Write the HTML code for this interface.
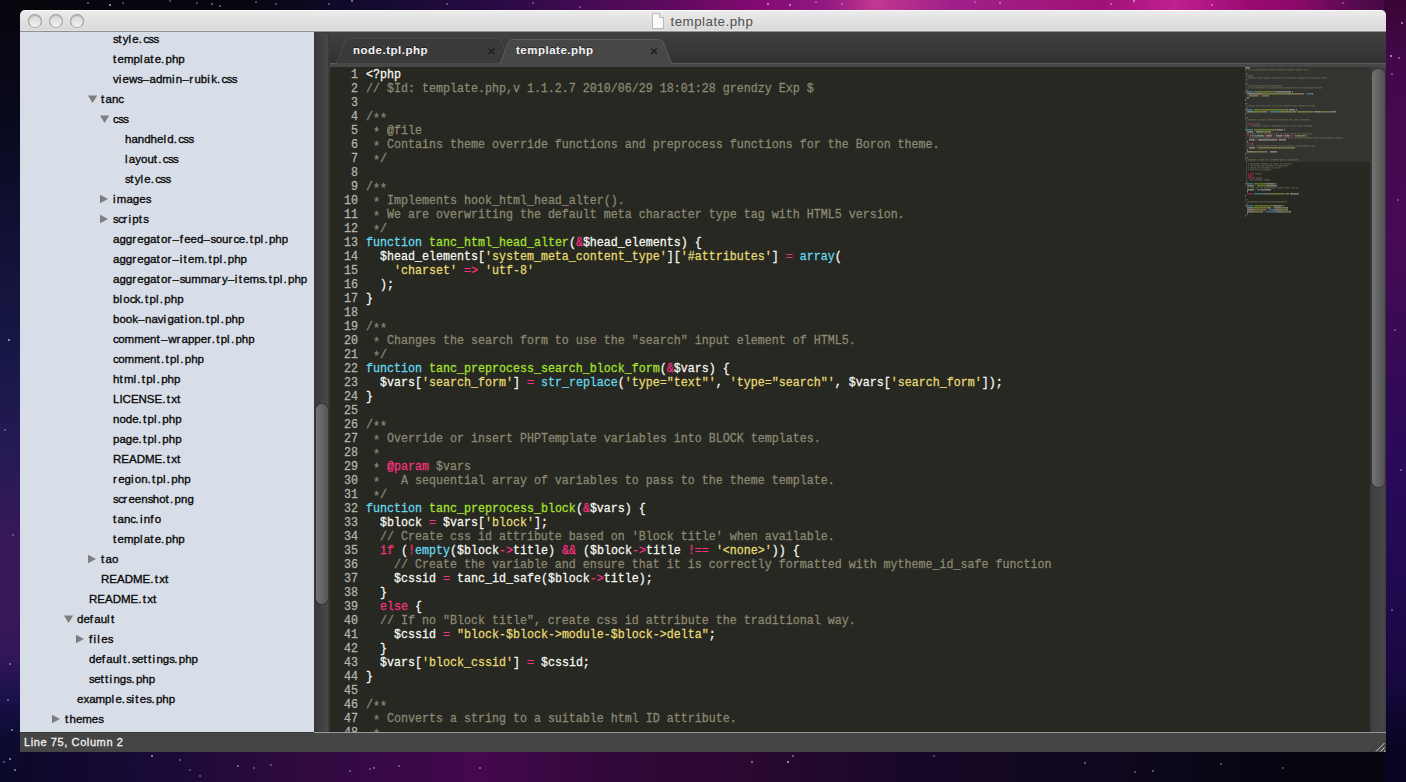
<!DOCTYPE html>
<html><head><meta charset="utf-8"><style>
html,body{margin:0;padding:0;width:1406px;height:782px;overflow:hidden;}
body{position:relative;background:#0a0814;font-family:"Liberation Sans",sans-serif;}
.bgt{position:absolute;left:0;top:0;width:1406px;height:12px;background:linear-gradient(90deg,#06050c 0px,#07060f 250px,#0c0a25 320px,#180a35 400px,#2a0a45 500px,#4a0a55 600px,#600a60 675px,#800a70 750px,#901880 825px,#c03890 875px,#a0208a 950px,#a01a80 1025px,#a01078 1100px,#c02090 1175px,#9a0a72 1250px,#8a0a68 1300px,#5a0a50 1350px,#3a0a3a 1406px);}
.bgb{position:absolute;left:0;top:750px;width:1406px;height:32px;background:linear-gradient(90deg,#0c0828 0px,#1a0a38 170px,#300a40 300px,#3c0848 420px,#45084e 480px,#300838 620px,#2a0830 750px,#180828 900px,#100820 1100px,#05050f 1300px,#05050f 1406px);}
.bgl{position:absolute;left:0;top:0;width:22px;height:782px;background:linear-gradient(180deg,#06050c 0px,#0a0a20 130px,#121238 250px,#181848 360px,#261a55 460px,#3a1858 550px,#3a1858 610px,#30165a 660px,#181048 700px,#0c0a30 740px,#0c0a2a 782px);}
.bgr{position:absolute;left:1384px;top:0;width:22px;height:782px;background:linear-gradient(180deg,#3a0535 0px,#42084a 60px,#470a55 240px,#3a0a55 330px,#2a0a58 460px,#200a50 580px,#180840 680px,#080520 750px,#080520 782px);}
.bg{display:none;position:absolute;left:0;top:0;width:1406px;height:782px;
 background:
  radial-gradient(ellipse 260px 140px at 880px 0px, rgba(190,40,150,0.9), rgba(190,40,150,0) 100%),
  radial-gradient(ellipse 520px 200px at 1050px 0px, rgba(140,20,120,0.95), rgba(140,20,120,0) 100%),
  radial-gradient(ellipse 120px 500px at 1406px 250px, rgba(70,10,90,0.9), rgba(70,10,90,0) 100%),
  radial-gradient(ellipse 300px 120px at 520px 782px, rgba(80,10,80,0.9), rgba(80,10,80,0) 100%),
  radial-gradient(ellipse 90px 300px at 0px 540px, rgba(70,20,90,0.9), rgba(70,20,90,0) 100%),
  linear-gradient(180deg,#05040a 0%, #100c30 30%, #1a0c40 60%, #0c0620 100%);
}
.win{position:absolute;left:20px;top:10px;width:1366px;height:742px;overflow:hidden;border-radius:5px 5px 0 0;background:#3c3c3c;}
.title{position:absolute;left:0;top:0;width:1366px;height:22px;background:linear-gradient(180deg,#fbfbfb 0px,#fbfbfb 1px,#ebebeb 1px,#d9d9d9 20px,#e2e2e2 20px,#e2e2e2 21px,#8f9191 21px);}
.btn{position:absolute;top:4px;width:12px;height:12px;border-radius:50%;border:1px solid #9c9c9c;border-bottom-color:#b4b4b4;box-shadow:inset 0 1px 1px rgba(0,0,0,0.12);background:linear-gradient(180deg,#d6d6d6,#e4e4e4 50%,#f2f2f2);}
.ttext{position:absolute;left:650.5px;top:4px;font-size:13.3px;letter-spacing:0.5px;color:#505050;}
.ticon{position:absolute;left:632px;top:3px;width:12px;height:16px;}
.side{position:absolute;left:0;top:22px;width:294px;height:700px;background:#d8dee8;overflow:hidden;}
.si{position:absolute;height:20px;line-height:20px;font-size:11.5px;color:#0a0a0a;white-space:nowrap;-webkit-text-stroke:0.35px #0a0a0a;}
.tri-d{position:absolute;width:0;height:0;border-left:4.5px solid transparent;border-right:4.5px solid transparent;border-top:8px solid #858585;}
.tri-r{position:absolute;width:0;height:0;border-top:4.5px solid transparent;border-bottom:4.5px solid transparent;border-left:8px solid #858585;}
.sbar{position:absolute;left:294px;top:22px;width:16px;height:700px;background:#3a3a3a;}
.sbar .trk{position:absolute;left:1px;top:1px;width:13px;height:699px;background:linear-gradient(90deg,#393939,#484848);border-radius:0 4px 0 0;}
.sbar .thumb{position:absolute;left:2px;top:372px;width:12px;height:200px;border-radius:6px;background:linear-gradient(90deg,#747474,#555555);box-shadow:0 0 0 1px #333;}
.tabbar{position:absolute;left:310px;top:22px;width:1056px;height:35px;}
.tabt{position:absolute;top:10.5px;font-size:11.5px;font-weight:bold;letter-spacing:0.5px;color:#f4f4f4;line-height:14px;text-shadow:0 -1px 0 rgba(0,0,0,0.5);}
.editor{position:absolute;left:310px;top:57px;width:1040px;height:665px;background:#272822;overflow:hidden;}
.ln{position:absolute;left:0;height:14px;line-height:14px;white-space:pre;font-family:"Liberation Mono",monospace;font-size:11.667px;-webkit-text-stroke:0.25px currentColor;}
.num{position:absolute;left:0;width:28px;text-align:right;color:#b4b4ae;transform:scaleY(1.05);transform-origin:0 10px;}
.tx{position:absolute;left:36px;transform:scaleY(1.05);transform-origin:0 10px;}
.w{color:#f8f8f2}.c{color:#8c8872}.k{color:#f5317f}.f{color:#66d9ef}.g{color:#a6e22e}.s{color:#e6db74}
.mm{position:absolute;left:915px;top:0px;}
.mmhl{position:absolute;left:915px;top:-1px;width:125px;height:96px;background:rgba(255,255,255,0.06);}
.vbar{position:absolute;left:1350px;top:57px;width:16px;height:665px;background:linear-gradient(90deg,#363636 0px,#404040 2px,#474747 14px,#3c3c3c 16px);}
.vbar .thumb{position:absolute;left:1.5px;top:2px;width:13px;height:418px;border-radius:6px;background:linear-gradient(90deg,#747474,#5a5a5a 70%,#505050);box-shadow:0 0 0 1px #333;}
.status{position:absolute;left:0;top:722px;width:1366px;height:20px;background:linear-gradient(90deg,#3a3a3a 0px,#3a3a3a 294px,#9a9a9a 294px) top/100% 1px no-repeat,#454545;}
.stext{position:absolute;left:4px;top:4px;font-size:11px;letter-spacing:0.6px;color:#f2f2f2;-webkit-text-stroke:0.3px #f2f2f2;}

.ast{position:relative;top:2px;}
.tri{position:absolute;}
.si i{font-style:normal;}
.si .n{letter-spacing:1.3px;}
.si .sc{letter-spacing:-0.6px;}
.si .hy{letter-spacing:0.7px;}

</style></head><body>
<div class="bgt"></div><div class="bgb"></div><div class="bgl"></div><div class="bgr"></div><svg style="position:absolute;left:0;top:0" width="1406" height="782"><circle cx="88" cy="3" r="1" fill="#e8d8f8" fill-opacity="0.5"/><circle cx="110" cy="5" r="1" fill="#e8d8f8" fill-opacity="0.8"/><circle cx="123" cy="3" r="1" fill="#e8d8f8" fill-opacity="0.4"/><circle cx="170" cy="1" r="1" fill="#e8d8f8" fill-opacity="0.4"/><circle cx="197" cy="3" r="1" fill="#e8d8f8" fill-opacity="0.4"/><circle cx="212" cy="4" r="1" fill="#e8d8f8" fill-opacity="0.5"/><circle cx="220" cy="6" r="1" fill="#e8d8f8" fill-opacity="0.5"/><circle cx="256" cy="2" r="1" fill="#e8d8f8" fill-opacity="0.4"/><circle cx="276" cy="4" r="1" fill="#e8d8f8" fill-opacity="0.4"/><circle cx="329" cy="4" r="1" fill="#e8d8f8" fill-opacity="0.4"/><circle cx="352" cy="1" r="1" fill="#e8d8f8" fill-opacity="0.6"/><circle cx="447" cy="4" r="1" fill="#e8d8f8" fill-opacity="0.4"/><circle cx="533" cy="3" r="1" fill="#e8d8f8" fill-opacity="0.4"/><circle cx="580" cy="7" r="1" fill="#e8d8f8" fill-opacity="0.4"/><circle cx="768" cy="4" r="1" fill="#e8d8f8" fill-opacity="0.7"/><circle cx="790" cy="5" r="1" fill="#e8d8f8" fill-opacity="0.7"/><circle cx="816" cy="2" r="1" fill="#e8d8f8" fill-opacity="0.4"/><circle cx="842" cy="4" r="1" fill="#e8d8f8" fill-opacity="0.4"/><circle cx="975" cy="2" r="1" fill="#e8d8f8" fill-opacity="0.4"/><circle cx="1000" cy="3" r="1" fill="#e8d8f8" fill-opacity="0.5"/><circle cx="1111" cy="4" r="1" fill="#e8d8f8" fill-opacity="0.5"/><circle cx="1134" cy="1" r="1" fill="#e8d8f8" fill-opacity="0.7"/><circle cx="1212" cy="5" r="1" fill="#e8d8f8" fill-opacity="0.5"/><circle cx="1343" cy="3" r="1" fill="#e8d8f8" fill-opacity="0.4"/><circle cx="1402" cy="23" r="1" fill="#e8d8f8" fill-opacity="0.7"/><circle cx="1391" cy="56" r="1" fill="#e8d8f8" fill-opacity="0.8"/><circle cx="1399" cy="58" r="1" fill="#e8d8f8" fill-opacity="0.5"/><circle cx="1392" cy="74" r="1" fill="#e8d8f8" fill-opacity="0.4"/><circle cx="1398" cy="200" r="1" fill="#e8d8f8" fill-opacity="0.4"/><circle cx="1395" cy="330" r="1" fill="#e8d8f8" fill-opacity="0.4"/><circle cx="1401" cy="470" r="1" fill="#e8d8f8" fill-opacity="0.4"/><circle cx="1392" cy="610" r="1" fill="#e8d8f8" fill-opacity="0.4"/><circle cx="9" cy="340" r="1" fill="#e8d8f8" fill-opacity="0.8"/><circle cx="5" cy="430" r="1" fill="#e8d8f8" fill-opacity="0.4"/><circle cx="13" cy="535" r="1" fill="#e8d8f8" fill-opacity="0.4"/><circle cx="10" cy="664" r="1" fill="#e8d8f8" fill-opacity="0.5"/><circle cx="8" cy="700" r="1" fill="#e8d8f8" fill-opacity="0.5"/><circle cx="12" cy="730" r="1" fill="#e8d8f8" fill-opacity="0.6"/><circle cx="4" cy="762" r="1" fill="#e8d8f8" fill-opacity="0.4"/><circle cx="10" cy="759" r="1" fill="#e8d8f8" fill-opacity="0.7"/><circle cx="15" cy="770" r="1" fill="#e8d8f8" fill-opacity="0.6"/><circle cx="152" cy="756" r="1" fill="#e8d8f8" fill-opacity="0.7"/><circle cx="180" cy="760" r="1" fill="#e8d8f8" fill-opacity="0.4"/><circle cx="190" cy="770" r="1" fill="#e8d8f8" fill-opacity="0.4"/><circle cx="200" cy="776" r="1" fill="#e8d8f8" fill-opacity="0.4"/><circle cx="238" cy="766" r="1" fill="#e8d8f8" fill-opacity="0.5"/><circle cx="254" cy="768" r="1" fill="#e8d8f8" fill-opacity="0.4"/><circle cx="271" cy="765" r="1" fill="#e8d8f8" fill-opacity="0.4"/><circle cx="350" cy="771" r="1" fill="#e8d8f8" fill-opacity="0.4"/><circle cx="370" cy="769" r="1" fill="#e8d8f8" fill-opacity="0.4"/><circle cx="374" cy="768" r="1" fill="#e8d8f8" fill-opacity="0.5"/><circle cx="399" cy="766" r="1" fill="#e8d8f8" fill-opacity="0.4"/><circle cx="480" cy="768" r="1" fill="#e8d8f8" fill-opacity="0.5"/><circle cx="752" cy="762" r="1" fill="#e8d8f8" fill-opacity="0.6"/><circle cx="788" cy="762" r="1" fill="#e8d8f8" fill-opacity="0.8"/><circle cx="793" cy="756" r="1" fill="#e8d8f8" fill-opacity="0.5"/><circle cx="934" cy="756" r="1" fill="#e8d8f8" fill-opacity="0.4"/><circle cx="1085" cy="763" r="1" fill="#e8d8f8" fill-opacity="0.5"/><circle cx="1135" cy="772" r="1" fill="#e8d8f8" fill-opacity="0.4"/><circle cx="1153" cy="771" r="1" fill="#e8d8f8" fill-opacity="0.5"/><circle cx="1221" cy="764" r="1" fill="#e8d8f8" fill-opacity="0.4"/><circle cx="1283" cy="768" r="1" fill="#e8d8f8" fill-opacity="0.4"/></svg>
<div class="win">
 <div class="title">
  <div class="btn" style="left:8px"></div>
  <div class="btn" style="left:29px"></div>
  <div class="btn" style="left:50px"></div>
  <svg class="ticon" viewBox="0 0 12 16"><path d="M0.5 0.5 H7.5 L11.5 4.5 V15.5 H0.5 Z" fill="#fafafa" stroke="#b8b8b8"/><path d="M7.5 0.5 V4.5 H11.5" fill="#eeeeee" stroke="#b8b8b8"/></svg>
  <div class="ttext">template.php</div>
 </div>
 <div class="side">
<div class="si" style="left:93px;top:-3px"><i class="sc">s</i><i class="n">t</i>y<i class="n">l</i>e<i class="n">.</i><i class="sc">c</i><i class="sc">s</i><i class="sc">s</i></div>
<div class="si" style="left:93px;top:17px"><i class="n">t</i>emp<i class="n">l</i>a<i class="n">t</i>e<i class="n">.</i>php</div>
<div class="si" style="left:93px;top:37px">v<i class="n">i</i>ew<i class="sc">s</i><i class="hy">–</i>adm<i class="n">i</i>n<i class="hy">–</i><i class="n">r</i>ub<i class="n">i</i>k<i class="n">.</i><i class="sc">c</i><i class="sc">s</i><i class="sc">s</i></div>
<div class="si" style="left:81px;top:57px"><i class="n">t</i>an<i class="sc">c</i></div>
<svg class="tri" style="left:68px;top:63px" width="10" height="9"><path d="M0,0.4 L9.2,0.4 L4.6,8 Z" fill="#7e7e7e"/></svg>
<div class="si" style="left:93px;top:77px"><i class="sc">c</i><i class="sc">s</i><i class="sc">s</i></div>
<svg class="tri" style="left:80px;top:83px" width="10" height="9"><path d="M0,0.4 L9.2,0.4 L4.6,8 Z" fill="#7e7e7e"/></svg>
<div class="si" style="left:105px;top:97px">handhe<i class="n">l</i>d<i class="n">.</i><i class="sc">c</i><i class="sc">s</i><i class="sc">s</i></div>
<div class="si" style="left:105px;top:117px"><i class="n">l</i>ayou<i class="n">t</i><i class="n">.</i><i class="sc">c</i><i class="sc">s</i><i class="sc">s</i></div>
<div class="si" style="left:105px;top:137px"><i class="sc">s</i><i class="n">t</i>y<i class="n">l</i>e<i class="n">.</i><i class="sc">c</i><i class="sc">s</i><i class="sc">s</i></div>
<div class="si" style="left:93px;top:157px"><i class="n">i</i>mage<i class="sc">s</i></div>
<svg class="tri" style="left:80px;top:162px" width="10" height="10"><path d="M0,0.7 L8,5 L0,9.3 Z" fill="#7e7e7e"/></svg>
<div class="si" style="left:93px;top:177px"><i class="sc">s</i><i class="sc">c</i><i class="n">r</i><i class="n">i</i>p<i class="n">t</i><i class="sc">s</i></div>
<svg class="tri" style="left:80px;top:182px" width="10" height="10"><path d="M0,0.7 L8,5 L0,9.3 Z" fill="#7e7e7e"/></svg>
<div class="si" style="left:93px;top:197px">agg<i class="n">r</i>ega<i class="n">t</i>o<i class="n">r</i><i class="hy">–</i><i class="n">f</i>eed<i class="hy">–</i><i class="sc">s</i>ou<i class="n">r</i><i class="sc">c</i>e<i class="n">.</i><i class="n">t</i>p<i class="n">l</i><i class="n">.</i>php</div>
<div class="si" style="left:93px;top:217px">agg<i class="n">r</i>ega<i class="n">t</i>o<i class="n">r</i><i class="hy">–</i><i class="n">i</i><i class="n">t</i>em<i class="n">.</i><i class="n">t</i>p<i class="n">l</i><i class="n">.</i>php</div>
<div class="si" style="left:93px;top:237px">agg<i class="n">r</i>ega<i class="n">t</i>o<i class="n">r</i><i class="hy">–</i><i class="sc">s</i>umma<i class="n">r</i>y<i class="hy">–</i><i class="n">i</i><i class="n">t</i>em<i class="sc">s</i><i class="n">.</i><i class="n">t</i>p<i class="n">l</i><i class="n">.</i>php</div>
<div class="si" style="left:93px;top:257px">b<i class="n">l</i>o<i class="sc">c</i>k<i class="n">.</i><i class="n">t</i>p<i class="n">l</i><i class="n">.</i>php</div>
<div class="si" style="left:93px;top:277px">book<i class="hy">–</i>nav<i class="n">i</i>ga<i class="n">t</i><i class="n">i</i>on<i class="n">.</i><i class="n">t</i>p<i class="n">l</i><i class="n">.</i>php</div>
<div class="si" style="left:93px;top:297px"><i class="sc">c</i>ommen<i class="n">t</i><i class="hy">–</i>w<i class="n">r</i>appe<i class="n">r</i><i class="n">.</i><i class="n">t</i>p<i class="n">l</i><i class="n">.</i>php</div>
<div class="si" style="left:93px;top:317px"><i class="sc">c</i>ommen<i class="n">t</i><i class="n">.</i><i class="n">t</i>p<i class="n">l</i><i class="n">.</i>php</div>
<div class="si" style="left:93px;top:337px">h<i class="n">t</i>m<i class="n">l</i><i class="n">.</i><i class="n">t</i>p<i class="n">l</i><i class="n">.</i>php</div>
<div class="si" style="left:93px;top:357px">LICENSE<i class="n">.</i><i class="n">t</i>x<i class="n">t</i></div>
<div class="si" style="left:93px;top:377px">node<i class="n">.</i><i class="n">t</i>p<i class="n">l</i><i class="n">.</i>php</div>
<div class="si" style="left:93px;top:397px">page<i class="n">.</i><i class="n">t</i>p<i class="n">l</i><i class="n">.</i>php</div>
<div class="si" style="left:93px;top:417px">README<i class="n">.</i><i class="n">t</i>x<i class="n">t</i></div>
<div class="si" style="left:93px;top:437px"><i class="n">r</i>eg<i class="n">i</i>on<i class="n">.</i><i class="n">t</i>p<i class="n">l</i><i class="n">.</i>php</div>
<div class="si" style="left:93px;top:457px"><i class="sc">s</i><i class="sc">c</i><i class="n">r</i>een<i class="sc">s</i>ho<i class="n">t</i><i class="n">.</i>png</div>
<div class="si" style="left:93px;top:477px"><i class="n">t</i>an<i class="sc">c</i><i class="n">.</i><i class="n">i</i>n<i class="n">f</i>o</div>
<div class="si" style="left:93px;top:497px"><i class="n">t</i>emp<i class="n">l</i>a<i class="n">t</i>e<i class="n">.</i>php</div>
<div class="si" style="left:81px;top:517px"><i class="n">t</i>ao</div>
<svg class="tri" style="left:68px;top:522px" width="10" height="10"><path d="M0,0.7 L8,5 L0,9.3 Z" fill="#7e7e7e"/></svg>
<div class="si" style="left:81px;top:537px">README<i class="n">.</i><i class="n">t</i>x<i class="n">t</i></div>
<div class="si" style="left:69px;top:557px">README<i class="n">.</i><i class="n">t</i>x<i class="n">t</i></div>
<div class="si" style="left:57px;top:577px">de<i class="n">f</i>au<i class="n">l</i><i class="n">t</i></div>
<svg class="tri" style="left:44px;top:583px" width="10" height="9"><path d="M0,0.4 L9.2,0.4 L4.6,8 Z" fill="#7e7e7e"/></svg>
<div class="si" style="left:69px;top:597px"><i class="n">f</i><i class="n">i</i><i class="n">l</i>e<i class="sc">s</i></div>
<svg class="tri" style="left:56px;top:602px" width="10" height="10"><path d="M0,0.7 L8,5 L0,9.3 Z" fill="#7e7e7e"/></svg>
<div class="si" style="left:69px;top:617px">de<i class="n">f</i>au<i class="n">l</i><i class="n">t</i><i class="n">.</i><i class="sc">s</i>e<i class="n">t</i><i class="n">t</i><i class="n">i</i>ng<i class="sc">s</i><i class="n">.</i>php</div>
<div class="si" style="left:69px;top:637px"><i class="sc">s</i>e<i class="n">t</i><i class="n">t</i><i class="n">i</i>ng<i class="sc">s</i><i class="n">.</i>php</div>
<div class="si" style="left:57px;top:657px">examp<i class="n">l</i>e<i class="n">.</i><i class="sc">s</i><i class="n">i</i><i class="n">t</i>e<i class="sc">s</i><i class="n">.</i>php</div>
<div class="si" style="left:45px;top:677px"><i class="n">t</i>heme<i class="sc">s</i></div>
<svg class="tri" style="left:32px;top:682px" width="10" height="10"><path d="M0,0.7 L8,5 L0,9.3 Z" fill="#7e7e7e"/></svg>
 </div>
 <div class="sbar"><div class="trk"></div><div class="thumb"></div></div>
 <div class="tabbar">
  <svg width="1056" height="35" viewBox="0 0 1056 35" style="position:absolute;left:0;top:0">
   <defs><linearGradient id="tbg" x1="0" y1="0" x2="0" y2="1"><stop offset="0" stop-color="#414141"/><stop offset="1" stop-color="#313131"/></linearGradient></defs>
   <rect x="0" y="0" width="1056" height="31" fill="url(#tbg)"/>
   <rect x="0" y="31" width="1056" height="1" fill="#5c5c5c"/>
   <rect x="0" y="32" width="1056" height="3" fill="#474747"/>
   <path d="M6,31.5 L14.4,11.5 Q16,6.5 19,6.5 L167,6.5 Q170.5,6.5 172,11.5 L180,31.5 Z" fill="#3a3a3a" stroke="#4a4a4a" stroke-width="1"/>
   <path d="M170,32 L177,13.8 Q179,7.5 182.5,7.5 L329,7.5 Q332.5,7.5 334.4,12.9 L341.8,32 Z" fill="#474747" stroke="#5c5c5c" stroke-width="1"/>
   <rect x="171" y="31" width="170" height="2" fill="#474747"/>
   <path d="M158.5,16.5 L164.5,22 M164.5,16.5 L158.5,22" stroke="#1e1e1e" stroke-width="1.4"/>
   <path d="M321,16.5 L327,22 M327,16.5 L321,22" stroke="#1e1e1e" stroke-width="1.4"/>
  </svg>
  <div class="tabt" style="left:23px">node.tpl.php</div>
  <div class="tabt" style="left:186px">template.php</div>
 </div>
 <div class="editor">
<div class="ln" style="top:1px"><span class="num">1</span><span class="tx"><span class="w">&lt;?php</span></span></div>
<div class="ln" style="top:15px"><span class="num">2</span><span class="tx"><span class="c">// $Id: template.php,v 1.1.2.7 2010/06/29 18:01:28 grendzy Exp $</span></span></div>
<div class="ln" style="top:29px"><span class="num">3</span><span class="tx"></span></div>
<div class="ln" style="top:43px"><span class="num">4</span><span class="tx"><span class="c">/<span class="ast">*</span><span class="ast">*</span></span></span></div>
<div class="ln" style="top:57px"><span class="num">5</span><span class="tx"><span class="c"> <span class="ast">*</span> @file</span></span></div>
<div class="ln" style="top:71px"><span class="num">6</span><span class="tx"><span class="c"> <span class="ast">*</span> Contains theme override functions and preprocess functions for the Boron theme.</span></span></div>
<div class="ln" style="top:85px"><span class="num">7</span><span class="tx"><span class="c"> <span class="ast">*</span>/</span></span></div>
<div class="ln" style="top:99px"><span class="num">8</span><span class="tx"></span></div>
<div class="ln" style="top:113px"><span class="num">9</span><span class="tx"><span class="c">/<span class="ast">*</span><span class="ast">*</span></span></span></div>
<div class="ln" style="top:127px"><span class="num">10</span><span class="tx"><span class="c"> <span class="ast">*</span> Implements hook_html_head_alter().</span></span></div>
<div class="ln" style="top:141px"><span class="num">11</span><span class="tx"><span class="c"> <span class="ast">*</span> We are overwriting the default meta character type tag with HTML5 version.</span></span></div>
<div class="ln" style="top:155px"><span class="num">12</span><span class="tx"><span class="c"> <span class="ast">*</span>/</span></span></div>
<div class="ln" style="top:169px"><span class="num">13</span><span class="tx"><span class="f">function</span><span class="w"> </span><span class="g">tanc_html_head_alter</span><span class="w">(</span><span class="k">&amp;</span><span class="w">$head_elements) {</span></span></div>
<div class="ln" style="top:183px"><span class="num">14</span><span class="tx"><span class="w">  $head_elements[</span><span class="s">&#x27;system_meta_content_type&#x27;</span><span class="w">][</span><span class="s">&#x27;#attributes&#x27;</span><span class="w">] </span><span class="k">=</span><span class="w"> </span><span class="f">array</span><span class="w">(</span></span></div>
<div class="ln" style="top:197px"><span class="num">15</span><span class="tx"><span class="w">    </span><span class="s">&#x27;charset&#x27;</span><span class="w"> </span><span class="k">=&gt;</span><span class="w"> </span><span class="s">&#x27;utf-8&#x27;</span></span></div>
<div class="ln" style="top:211px"><span class="num">16</span><span class="tx"><span class="w">  );</span></span></div>
<div class="ln" style="top:225px"><span class="num">17</span><span class="tx"><span class="w">}</span></span></div>
<div class="ln" style="top:239px"><span class="num">18</span><span class="tx"></span></div>
<div class="ln" style="top:253px"><span class="num">19</span><span class="tx"><span class="c">/<span class="ast">*</span><span class="ast">*</span></span></span></div>
<div class="ln" style="top:267px"><span class="num">20</span><span class="tx"><span class="c"> <span class="ast">*</span> Changes the search form to use the &quot;search&quot; input element of HTML5.</span></span></div>
<div class="ln" style="top:281px"><span class="num">21</span><span class="tx"><span class="c"> <span class="ast">*</span>/</span></span></div>
<div class="ln" style="top:295px"><span class="num">22</span><span class="tx"><span class="f">function</span><span class="w"> </span><span class="g">tanc_preprocess_search_block_form</span><span class="w">(</span><span class="k">&amp;</span><span class="w">$vars) {</span></span></div>
<div class="ln" style="top:309px"><span class="num">23</span><span class="tx"><span class="w">  $vars[</span><span class="s">&#x27;search_form&#x27;</span><span class="w">] </span><span class="k">=</span><span class="w"> </span><span class="f">str_replace</span><span class="w">(</span><span class="s">&#x27;type=&quot;text&quot;&#x27;</span><span class="w">, </span><span class="s">&#x27;type=&quot;search&quot;&#x27;</span><span class="w">, $vars[</span><span class="s">&#x27;search_form&#x27;</span><span class="w">]);</span></span></div>
<div class="ln" style="top:323px"><span class="num">24</span><span class="tx"><span class="w">}</span></span></div>
<div class="ln" style="top:337px"><span class="num">25</span><span class="tx"></span></div>
<div class="ln" style="top:351px"><span class="num">26</span><span class="tx"><span class="c">/<span class="ast">*</span><span class="ast">*</span></span></span></div>
<div class="ln" style="top:365px"><span class="num">27</span><span class="tx"><span class="c"> <span class="ast">*</span> Override or insert PHPTemplate variables into BLOCK templates.</span></span></div>
<div class="ln" style="top:379px"><span class="num">28</span><span class="tx"><span class="c"> <span class="ast">*</span></span></span></div>
<div class="ln" style="top:393px"><span class="num">29</span><span class="tx"><span class="c"> <span class="ast">*</span> </span><span class="k">@param</span><span class="c"> $vars</span></span></div>
<div class="ln" style="top:407px"><span class="num">30</span><span class="tx"><span class="c"> <span class="ast">*</span>   A sequential array of variables to pass to the theme template.</span></span></div>
<div class="ln" style="top:421px"><span class="num">31</span><span class="tx"><span class="c"> <span class="ast">*</span>/</span></span></div>
<div class="ln" style="top:435px"><span class="num">32</span><span class="tx"><span class="f">function</span><span class="w"> </span><span class="g">tanc_preprocess_block</span><span class="w">(</span><span class="k">&amp;</span><span class="w">$vars) {</span></span></div>
<div class="ln" style="top:449px"><span class="num">33</span><span class="tx"><span class="w">  $block </span><span class="k">=</span><span class="w"> $vars[</span><span class="s">&#x27;block&#x27;</span><span class="w">];</span></span></div>
<div class="ln" style="top:463px"><span class="num">34</span><span class="tx"><span class="c">  // Create css id attribute based on &#x27;Block title&#x27; when available.</span></span></div>
<div class="ln" style="top:477px"><span class="num">35</span><span class="tx"><span class="w">  </span><span class="k">if</span><span class="w"> (</span><span class="k">!</span><span class="f">empty</span><span class="w">($block</span><span class="k">-&gt;</span><span class="w">title) </span><span class="k">&amp;&amp;</span><span class="w"> ($block</span><span class="k">-&gt;</span><span class="w">title </span><span class="k">!==</span><span class="w"> </span><span class="s">&#x27;&lt;none&gt;&#x27;</span><span class="w">)) {</span></span></div>
<div class="ln" style="top:491px"><span class="num">36</span><span class="tx"><span class="c">    // Create the variable and ensure that it is correctly formatted with mytheme_id_safe function</span></span></div>
<div class="ln" style="top:505px"><span class="num">37</span><span class="tx"><span class="w">    $cssid </span><span class="k">=</span><span class="w"> tanc_id_safe($block</span><span class="k">-&gt;</span><span class="w">title);</span></span></div>
<div class="ln" style="top:519px"><span class="num">38</span><span class="tx"><span class="w">  }</span></span></div>
<div class="ln" style="top:533px"><span class="num">39</span><span class="tx"><span class="w">  </span><span class="k">else</span><span class="w"> {</span></span></div>
<div class="ln" style="top:547px"><span class="num">40</span><span class="tx"><span class="c">  // If no &quot;Block title&quot;, create css id attribute the traditional way.</span></span></div>
<div class="ln" style="top:561px"><span class="num">41</span><span class="tx"><span class="w">    $cssid </span><span class="k">=</span><span class="w"> </span><span class="s">&quot;block-$block-&gt;module-$block-&gt;delta&quot;</span><span class="w">;</span></span></div>
<div class="ln" style="top:575px"><span class="num">42</span><span class="tx"><span class="w">  }</span></span></div>
<div class="ln" style="top:589px"><span class="num">43</span><span class="tx"><span class="w">  $vars[</span><span class="s">&#x27;block_cssid&#x27;</span><span class="w">] </span><span class="k">=</span><span class="w"> $cssid;</span></span></div>
<div class="ln" style="top:603px"><span class="num">44</span><span class="tx"><span class="w">}</span></span></div>
<div class="ln" style="top:617px"><span class="num">45</span><span class="tx"></span></div>
<div class="ln" style="top:631px"><span class="num">46</span><span class="tx"><span class="c">/<span class="ast">*</span><span class="ast">*</span></span></span></div>
<div class="ln" style="top:645px"><span class="num">47</span><span class="tx"><span class="c"> <span class="ast">*</span> Converts a string to a suitable html ID attribute.</span></span></div>
<div class="ln" style="top:659px"><span class="num">48</span><span class="tx"><span class="c"> <span class="ast">*</span></span></span></div>
 <div class="mmhl"></div>
<svg class="mm" width="125" height="160" viewBox="0 0 125 160" style="opacity:0.38"><rect x="0" y="0" width="5" height="1.6" fill="#f8f8f2"/><rect x="0" y="2" width="2" height="1.6" fill="#807c68"/><rect x="3" y="2" width="4" height="1.6" fill="#807c68"/><rect x="8" y="2" width="14" height="1.6" fill="#807c68"/><rect x="23" y="2" width="7" height="1.6" fill="#807c68"/><rect x="31" y="2" width="10" height="1.6" fill="#807c68"/><rect x="42" y="2" width="8" height="1.6" fill="#807c68"/><rect x="51" y="2" width="7" height="1.6" fill="#807c68"/><rect x="59" y="2" width="3" height="1.6" fill="#807c68"/><rect x="63" y="2" width="1" height="1.6" fill="#807c68"/><rect x="0" y="6" width="3" height="1.6" fill="#807c68"/><rect x="1" y="8" width="1" height="1.6" fill="#807c68"/><rect x="3" y="8" width="5" height="1.6" fill="#807c68"/><rect x="1" y="10" width="1" height="1.6" fill="#807c68"/><rect x="3" y="10" width="8" height="1.6" fill="#807c68"/><rect x="12" y="10" width="5" height="1.6" fill="#807c68"/><rect x="18" y="10" width="8" height="1.6" fill="#807c68"/><rect x="27" y="10" width="9" height="1.6" fill="#807c68"/><rect x="37" y="10" width="3" height="1.6" fill="#807c68"/><rect x="41" y="10" width="10" height="1.6" fill="#807c68"/><rect x="52" y="10" width="9" height="1.6" fill="#807c68"/><rect x="62" y="10" width="3" height="1.6" fill="#807c68"/><rect x="66" y="10" width="3" height="1.6" fill="#807c68"/><rect x="70" y="10" width="5" height="1.6" fill="#807c68"/><rect x="76" y="10" width="6" height="1.6" fill="#807c68"/><rect x="1" y="12" width="2" height="1.6" fill="#807c68"/><rect x="0" y="16" width="3" height="1.6" fill="#807c68"/><rect x="1" y="18" width="1" height="1.6" fill="#807c68"/><rect x="3" y="18" width="10" height="1.6" fill="#807c68"/><rect x="14" y="18" width="23" height="1.6" fill="#807c68"/><rect x="1" y="20" width="1" height="1.6" fill="#807c68"/><rect x="3" y="20" width="2" height="1.6" fill="#807c68"/><rect x="6" y="20" width="3" height="1.6" fill="#807c68"/><rect x="10" y="20" width="11" height="1.6" fill="#807c68"/><rect x="22" y="20" width="3" height="1.6" fill="#807c68"/><rect x="26" y="20" width="7" height="1.6" fill="#807c68"/><rect x="34" y="20" width="4" height="1.6" fill="#807c68"/><rect x="39" y="20" width="9" height="1.6" fill="#807c68"/><rect x="49" y="20" width="4" height="1.6" fill="#807c68"/><rect x="54" y="20" width="3" height="1.6" fill="#807c68"/><rect x="58" y="20" width="4" height="1.6" fill="#807c68"/><rect x="63" y="20" width="5" height="1.6" fill="#807c68"/><rect x="69" y="20" width="8" height="1.6" fill="#807c68"/><rect x="1" y="22" width="2" height="1.6" fill="#807c68"/><rect x="0" y="24" width="8" height="1.6" fill="#66d9ef"/><rect x="9" y="24" width="20" height="1.6" fill="#a6e22e"/><rect x="29" y="24" width="1" height="1.6" fill="#f8f8f2"/><rect x="30" y="24" width="1" height="1.6" fill="#f92672"/><rect x="31" y="24" width="15" height="1.6" fill="#f8f8f2"/><rect x="47" y="24" width="1" height="1.6" fill="#f8f8f2"/><rect x="2" y="26" width="15" height="1.6" fill="#f8f8f2"/><rect x="17" y="26" width="26" height="1.6" fill="#e6db74"/><rect x="43" y="26" width="2" height="1.6" fill="#f8f8f2"/><rect x="45" y="26" width="13" height="1.6" fill="#e6db74"/><rect x="58" y="26" width="1" height="1.6" fill="#f8f8f2"/><rect x="60" y="26" width="1" height="1.6" fill="#f92672"/><rect x="62" y="26" width="5" height="1.6" fill="#66d9ef"/><rect x="67" y="26" width="1" height="1.6" fill="#f8f8f2"/><rect x="4" y="28" width="9" height="1.6" fill="#e6db74"/><rect x="14" y="28" width="2" height="1.6" fill="#f92672"/><rect x="17" y="28" width="7" height="1.6" fill="#e6db74"/><rect x="2" y="30" width="2" height="1.6" fill="#f8f8f2"/><rect x="0" y="32" width="1" height="1.6" fill="#f8f8f2"/><rect x="0" y="36" width="3" height="1.6" fill="#807c68"/><rect x="1" y="38" width="1" height="1.6" fill="#807c68"/><rect x="3" y="38" width="7" height="1.6" fill="#807c68"/><rect x="11" y="38" width="3" height="1.6" fill="#807c68"/><rect x="15" y="38" width="6" height="1.6" fill="#807c68"/><rect x="22" y="38" width="4" height="1.6" fill="#807c68"/><rect x="27" y="38" width="2" height="1.6" fill="#807c68"/><rect x="30" y="38" width="3" height="1.6" fill="#807c68"/><rect x="34" y="38" width="3" height="1.6" fill="#807c68"/><rect x="38" y="38" width="8" height="1.6" fill="#807c68"/><rect x="47" y="38" width="5" height="1.6" fill="#807c68"/><rect x="53" y="38" width="7" height="1.6" fill="#807c68"/><rect x="61" y="38" width="2" height="1.6" fill="#807c68"/><rect x="64" y="38" width="6" height="1.6" fill="#807c68"/><rect x="1" y="40" width="2" height="1.6" fill="#807c68"/><rect x="0" y="42" width="8" height="1.6" fill="#66d9ef"/><rect x="9" y="42" width="33" height="1.6" fill="#a6e22e"/><rect x="42" y="42" width="1" height="1.6" fill="#f8f8f2"/><rect x="43" y="42" width="1" height="1.6" fill="#f92672"/><rect x="44" y="42" width="6" height="1.6" fill="#f8f8f2"/><rect x="51" y="42" width="1" height="1.6" fill="#f8f8f2"/><rect x="2" y="44" width="6" height="1.6" fill="#f8f8f2"/><rect x="8" y="44" width="13" height="1.6" fill="#e6db74"/><rect x="21" y="44" width="1" height="1.6" fill="#f8f8f2"/><rect x="23" y="44" width="1" height="1.6" fill="#f92672"/><rect x="25" y="44" width="11" height="1.6" fill="#66d9ef"/><rect x="36" y="44" width="1" height="1.6" fill="#f8f8f2"/><rect x="37" y="44" width="13" height="1.6" fill="#e6db74"/><rect x="50" y="44" width="1" height="1.6" fill="#f8f8f2"/><rect x="52" y="44" width="15" height="1.6" fill="#e6db74"/><rect x="67" y="44" width="1" height="1.6" fill="#f8f8f2"/><rect x="69" y="44" width="6" height="1.6" fill="#f8f8f2"/><rect x="75" y="44" width="13" height="1.6" fill="#e6db74"/><rect x="88" y="44" width="3" height="1.6" fill="#f8f8f2"/><rect x="0" y="46" width="1" height="1.6" fill="#f8f8f2"/><rect x="0" y="50" width="3" height="1.6" fill="#807c68"/><rect x="1" y="52" width="1" height="1.6" fill="#807c68"/><rect x="3" y="52" width="8" height="1.6" fill="#807c68"/><rect x="12" y="52" width="2" height="1.6" fill="#807c68"/><rect x="15" y="52" width="6" height="1.6" fill="#807c68"/><rect x="22" y="52" width="11" height="1.6" fill="#807c68"/><rect x="34" y="52" width="9" height="1.6" fill="#807c68"/><rect x="44" y="52" width="4" height="1.6" fill="#807c68"/><rect x="49" y="52" width="5" height="1.6" fill="#807c68"/><rect x="55" y="52" width="10" height="1.6" fill="#807c68"/><rect x="1" y="54" width="1" height="1.6" fill="#807c68"/><rect x="1" y="56" width="1" height="1.6" fill="#807c68"/><rect x="3" y="56" width="6" height="1.6" fill="#f92672"/><rect x="10" y="56" width="5" height="1.6" fill="#807c68"/><rect x="1" y="58" width="1" height="1.6" fill="#807c68"/><rect x="5" y="58" width="1" height="1.6" fill="#807c68"/><rect x="7" y="58" width="10" height="1.6" fill="#807c68"/><rect x="18" y="58" width="5" height="1.6" fill="#807c68"/><rect x="24" y="58" width="2" height="1.6" fill="#807c68"/><rect x="27" y="58" width="9" height="1.6" fill="#807c68"/><rect x="37" y="58" width="2" height="1.6" fill="#807c68"/><rect x="40" y="58" width="4" height="1.6" fill="#807c68"/><rect x="45" y="58" width="2" height="1.6" fill="#807c68"/><rect x="48" y="58" width="3" height="1.6" fill="#807c68"/><rect x="52" y="58" width="5" height="1.6" fill="#807c68"/><rect x="58" y="58" width="9" height="1.6" fill="#807c68"/><rect x="1" y="60" width="2" height="1.6" fill="#807c68"/><rect x="0" y="62" width="8" height="1.6" fill="#66d9ef"/><rect x="9" y="62" width="21" height="1.6" fill="#a6e22e"/><rect x="30" y="62" width="1" height="1.6" fill="#f8f8f2"/><rect x="31" y="62" width="1" height="1.6" fill="#f92672"/><rect x="32" y="62" width="6" height="1.6" fill="#f8f8f2"/><rect x="39" y="62" width="1" height="1.6" fill="#f8f8f2"/><rect x="2" y="64" width="6" height="1.6" fill="#f8f8f2"/><rect x="9" y="64" width="1" height="1.6" fill="#f92672"/><rect x="11" y="64" width="6" height="1.6" fill="#f8f8f2"/><rect x="17" y="64" width="7" height="1.6" fill="#e6db74"/><rect x="24" y="64" width="2" height="1.6" fill="#f8f8f2"/><rect x="2" y="66" width="2" height="1.6" fill="#807c68"/><rect x="5" y="66" width="6" height="1.6" fill="#807c68"/><rect x="12" y="66" width="3" height="1.6" fill="#807c68"/><rect x="16" y="66" width="2" height="1.6" fill="#807c68"/><rect x="19" y="66" width="9" height="1.6" fill="#807c68"/><rect x="29" y="66" width="5" height="1.6" fill="#807c68"/><rect x="35" y="66" width="2" height="1.6" fill="#807c68"/><rect x="38" y="66" width="6" height="1.6" fill="#807c68"/><rect x="45" y="66" width="6" height="1.6" fill="#807c68"/><rect x="52" y="66" width="4" height="1.6" fill="#807c68"/><rect x="57" y="66" width="10" height="1.6" fill="#807c68"/><rect x="2" y="68" width="2" height="1.6" fill="#f92672"/><rect x="5" y="68" width="1" height="1.6" fill="#f8f8f2"/><rect x="6" y="68" width="1" height="1.6" fill="#f92672"/><rect x="7" y="68" width="5" height="1.6" fill="#66d9ef"/><rect x="12" y="68" width="7" height="1.6" fill="#f8f8f2"/><rect x="19" y="68" width="2" height="1.6" fill="#f92672"/><rect x="21" y="68" width="6" height="1.6" fill="#f8f8f2"/><rect x="28" y="68" width="2" height="1.6" fill="#f92672"/><rect x="31" y="68" width="7" height="1.6" fill="#f8f8f2"/><rect x="38" y="68" width="2" height="1.6" fill="#f92672"/><rect x="40" y="68" width="5" height="1.6" fill="#f8f8f2"/><rect x="46" y="68" width="3" height="1.6" fill="#f92672"/><rect x="50" y="68" width="8" height="1.6" fill="#e6db74"/><rect x="58" y="68" width="2" height="1.6" fill="#f8f8f2"/><rect x="61" y="68" width="1" height="1.6" fill="#f8f8f2"/><rect x="4" y="70" width="2" height="1.6" fill="#807c68"/><rect x="7" y="70" width="6" height="1.6" fill="#807c68"/><rect x="14" y="70" width="3" height="1.6" fill="#807c68"/><rect x="18" y="70" width="8" height="1.6" fill="#807c68"/><rect x="27" y="70" width="3" height="1.6" fill="#807c68"/><rect x="31" y="70" width="6" height="1.6" fill="#807c68"/><rect x="38" y="70" width="4" height="1.6" fill="#807c68"/><rect x="43" y="70" width="2" height="1.6" fill="#807c68"/><rect x="46" y="70" width="2" height="1.6" fill="#807c68"/><rect x="49" y="70" width="9" height="1.6" fill="#807c68"/><rect x="59" y="70" width="9" height="1.6" fill="#807c68"/><rect x="69" y="70" width="4" height="1.6" fill="#807c68"/><rect x="74" y="70" width="15" height="1.6" fill="#807c68"/><rect x="90" y="70" width="8" height="1.6" fill="#807c68"/><rect x="4" y="72" width="6" height="1.6" fill="#f8f8f2"/><rect x="11" y="72" width="1" height="1.6" fill="#f92672"/><rect x="13" y="72" width="19" height="1.6" fill="#f8f8f2"/><rect x="32" y="72" width="2" height="1.6" fill="#f92672"/><rect x="34" y="72" width="7" height="1.6" fill="#f8f8f2"/><rect x="2" y="74" width="1" height="1.6" fill="#f8f8f2"/><rect x="2" y="76" width="4" height="1.6" fill="#f92672"/><rect x="7" y="76" width="1" height="1.6" fill="#f8f8f2"/><rect x="2" y="78" width="2" height="1.6" fill="#807c68"/><rect x="5" y="78" width="2" height="1.6" fill="#807c68"/><rect x="8" y="78" width="2" height="1.6" fill="#807c68"/><rect x="11" y="78" width="6" height="1.6" fill="#807c68"/><rect x="18" y="78" width="7" height="1.6" fill="#807c68"/><rect x="26" y="78" width="6" height="1.6" fill="#807c68"/><rect x="33" y="78" width="3" height="1.6" fill="#807c68"/><rect x="37" y="78" width="2" height="1.6" fill="#807c68"/><rect x="40" y="78" width="9" height="1.6" fill="#807c68"/><rect x="50" y="78" width="3" height="1.6" fill="#807c68"/><rect x="54" y="78" width="11" height="1.6" fill="#807c68"/><rect x="66" y="78" width="4" height="1.6" fill="#807c68"/><rect x="4" y="80" width="6" height="1.6" fill="#f8f8f2"/><rect x="11" y="80" width="1" height="1.6" fill="#f92672"/><rect x="13" y="80" width="36" height="1.6" fill="#e6db74"/><rect x="49" y="80" width="1" height="1.6" fill="#f8f8f2"/><rect x="2" y="82" width="1" height="1.6" fill="#f8f8f2"/><rect x="2" y="84" width="6" height="1.6" fill="#f8f8f2"/><rect x="8" y="84" width="13" height="1.6" fill="#e6db74"/><rect x="21" y="84" width="1" height="1.6" fill="#f8f8f2"/><rect x="23" y="84" width="1" height="1.6" fill="#f92672"/><rect x="25" y="84" width="7" height="1.6" fill="#f8f8f2"/><rect x="0" y="86" width="1" height="1.6" fill="#f8f8f2"/><rect x="0" y="90" width="3" height="1.6" fill="#807c68"/><rect x="1" y="92" width="1" height="1.6" fill="#807c68"/><rect x="3" y="92" width="8" height="1.6" fill="#807c68"/><rect x="12" y="92" width="1" height="1.6" fill="#807c68"/><rect x="14" y="92" width="6" height="1.6" fill="#807c68"/><rect x="21" y="92" width="2" height="1.6" fill="#807c68"/><rect x="24" y="92" width="1" height="1.6" fill="#807c68"/><rect x="26" y="92" width="8" height="1.6" fill="#807c68"/><rect x="35" y="92" width="4" height="1.6" fill="#807c68"/><rect x="40" y="92" width="2" height="1.6" fill="#807c68"/><rect x="43" y="92" width="10" height="1.6" fill="#807c68"/><rect x="1" y="94" width="1" height="1.6" fill="#807c68"/><rect x="1" y="96" width="1" height="1.6" fill="#807c68"/><rect x="3" y="96" width="1" height="1.6" fill="#807c68"/><rect x="5" y="96" width="10" height="1.6" fill="#807c68"/><rect x="16" y="96" width="7" height="1.6" fill="#807c68"/><rect x="24" y="96" width="3" height="1.6" fill="#807c68"/><rect x="28" y="96" width="6" height="1.6" fill="#807c68"/><rect x="35" y="96" width="3" height="1.6" fill="#807c68"/><rect x="39" y="96" width="8" height="1.6" fill="#807c68"/><rect x="1" y="98" width="1" height="1.6" fill="#807c68"/><rect x="3" y="98" width="1" height="1.6" fill="#807c68"/><rect x="5" y="98" width="3" height="1.6" fill="#807c68"/><rect x="9" y="98" width="10" height="1.6" fill="#807c68"/><rect x="20" y="98" width="9" height="1.6" fill="#807c68"/><rect x="30" y="98" width="2" height="1.6" fill="#807c68"/><rect x="33" y="98" width="10" height="1.6" fill="#807c68"/><rect x="1" y="100" width="1" height="1.6" fill="#807c68"/><rect x="3" y="100" width="1" height="1.6" fill="#807c68"/><rect x="5" y="100" width="6" height="1.6" fill="#807c68"/><rect x="12" y="100" width="3" height="1.6" fill="#807c68"/><rect x="16" y="100" width="9" height="1.6" fill="#807c68"/><rect x="26" y="100" width="2" height="1.6" fill="#807c68"/><rect x="29" y="100" width="7" height="1.6" fill="#807c68"/><rect x="1" y="102" width="1" height="1.6" fill="#807c68"/><rect x="3" y="102" width="1" height="1.6" fill="#807c68"/><rect x="5" y="102" width="4" height="1.6" fill="#807c68"/><rect x="10" y="102" width="3" height="1.6" fill="#807c68"/><rect x="14" y="102" width="3" height="1.6" fill="#807c68"/><rect x="18" y="102" width="8" height="1.6" fill="#807c68"/><rect x="1" y="104" width="1" height="1.6" fill="#807c68"/><rect x="1" y="106" width="1" height="1.6" fill="#807c68"/><rect x="3" y="106" width="6" height="1.6" fill="#f92672"/><rect x="10" y="106" width="7" height="1.6" fill="#807c68"/><rect x="1" y="108" width="1" height="1.6" fill="#807c68"/><rect x="3" y="108" width="4" height="1.6" fill="#f92672"/><rect x="1" y="110" width="1" height="1.6" fill="#807c68"/><rect x="3" y="110" width="7" height="1.6" fill="#f92672"/><rect x="11" y="110" width="6" height="1.6" fill="#807c68"/><rect x="1" y="112" width="1" height="1.6" fill="#807c68"/><rect x="5" y="112" width="3" height="1.6" fill="#807c68"/><rect x="9" y="112" width="9" height="1.6" fill="#807c68"/><rect x="19" y="112" width="6" height="1.6" fill="#807c68"/><rect x="1" y="114" width="2" height="1.6" fill="#807c68"/><rect x="0" y="116" width="8" height="1.6" fill="#66d9ef"/><rect x="9" y="116" width="12" height="1.6" fill="#a6e22e"/><rect x="21" y="116" width="9" height="1.6" fill="#f8f8f2"/><rect x="31" y="116" width="1" height="1.6" fill="#f8f8f2"/><rect x="2" y="118" width="7" height="1.6" fill="#f8f8f2"/><rect x="10" y="118" width="1" height="1.6" fill="#f92672"/><rect x="12" y="118" width="10" height="1.6" fill="#a6e22e"/><rect x="22" y="118" width="10" height="1.6" fill="#f8f8f2"/><rect x="2" y="120" width="2" height="1.6" fill="#807c68"/><rect x="5" y="120" width="5" height="1.6" fill="#807c68"/><rect x="11" y="120" width="3" height="1.6" fill="#807c68"/><rect x="15" y="120" width="3" height="1.6" fill="#807c68"/><rect x="19" y="120" width="12" height="1.6" fill="#807c68"/><rect x="32" y="120" width="6" height="1.6" fill="#807c68"/><rect x="39" y="120" width="6" height="1.6" fill="#807c68"/><rect x="46" y="120" width="4" height="1.6" fill="#807c68"/><rect x="51" y="120" width="2" height="1.6" fill="#807c68"/><rect x="2" y="122" width="7" height="1.6" fill="#f8f8f2"/><rect x="10" y="122" width="1" height="1.6" fill="#f92672"/><rect x="12" y="122" width="4" height="1.6" fill="#66d9ef"/><rect x="16" y="122" width="10" height="1.6" fill="#f8f8f2"/><rect x="2" y="124" width="1" height="1.6" fill="#f8f8f2"/><rect x="2" y="126" width="6" height="1.6" fill="#f92672"/><rect x="9" y="126" width="12" height="1.6" fill="#66d9ef"/><rect x="21" y="126" width="1" height="1.6" fill="#f8f8f2"/><rect x="22" y="126" width="16" height="1.6" fill="#e6db74"/><rect x="38" y="126" width="1" height="1.6" fill="#f8f8f2"/><rect x="40" y="126" width="3" height="1.6" fill="#e6db74"/><rect x="43" y="126" width="1" height="1.6" fill="#f8f8f2"/><rect x="45" y="126" width="9" height="1.6" fill="#f8f8f2"/><rect x="0" y="128" width="1" height="1.6" fill="#f8f8f2"/><rect x="0" y="132" width="3" height="1.6" fill="#807c68"/><rect x="1" y="134" width="1" height="1.6" fill="#807c68"/><rect x="3" y="134" width="10" height="1.6" fill="#807c68"/><rect x="14" y="134" width="28" height="1.6" fill="#807c68"/><rect x="1" y="136" width="2" height="1.6" fill="#807c68"/><rect x="0" y="138" width="8" height="1.6" fill="#66d9ef"/><rect x="9" y="138" width="20" height="1.6" fill="#a6e22e"/><rect x="29" y="138" width="8" height="1.6" fill="#f8f8f2"/><rect x="38" y="138" width="1" height="1.6" fill="#f8f8f2"/><rect x="2" y="140" width="6" height="1.6" fill="#f8f8f2"/><rect x="8" y="140" width="15" height="1.6" fill="#e6db74"/><rect x="23" y="140" width="3" height="1.6" fill="#f8f8f2"/><rect x="27" y="140" width="1" height="1.6" fill="#f92672"/><rect x="29" y="140" width="6" height="1.6" fill="#f8f8f2"/><rect x="35" y="140" width="6" height="1.6" fill="#e6db74"/><rect x="41" y="140" width="2" height="1.6" fill="#f8f8f2"/><rect x="2" y="142" width="6" height="1.6" fill="#f8f8f2"/><rect x="8" y="142" width="12" height="1.6" fill="#e6db74"/><rect x="20" y="142" width="1" height="1.6" fill="#f8f8f2"/><rect x="22" y="142" width="1" height="1.6" fill="#f92672"/><rect x="24" y="142" width="5" height="1.6" fill="#66d9ef"/><rect x="29" y="142" width="7" height="1.6" fill="#f8f8f2"/><rect x="36" y="142" width="5" height="1.6" fill="#e6db74"/><rect x="41" y="142" width="2" height="1.6" fill="#f8f8f2"/><rect x="2" y="144" width="6" height="1.6" fill="#f8f8f2"/><rect x="8" y="144" width="9" height="1.6" fill="#e6db74"/><rect x="17" y="144" width="1" height="1.6" fill="#f8f8f2"/><rect x="19" y="144" width="1" height="1.6" fill="#f92672"/><rect x="21" y="144" width="11" height="1.6" fill="#66d9ef"/><rect x="32" y="144" width="7" height="1.6" fill="#f8f8f2"/><rect x="39" y="144" width="5" height="1.6" fill="#e6db74"/><rect x="44" y="144" width="2" height="1.6" fill="#f8f8f2"/><rect x="2" y="146" width="1" height="1.6" fill="#f8f8f2"/><rect x="0" y="148" width="1" height="1.6" fill="#f8f8f2"/></svg>
 </div>
 <div class="vbar"><div class="thumb"></div></div>
 <div class="status"><div class="stext">Line 75, Column 2</div><svg style="position:absolute;left:1354px;top:10px" width="12" height="10" viewBox="0 0 12 10"><path d="M2,9.5 L10.5,1 M6.5,9.5 L10.5,5.5" stroke="#cfcfcf" stroke-width="1"/><rect x="10" y="8.5" width="1.2" height="1.2" fill="#d8d8d8"/></svg></div>
</div>

</body></html>
